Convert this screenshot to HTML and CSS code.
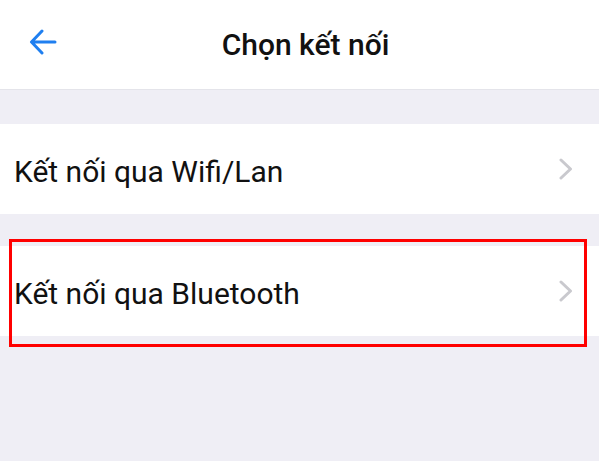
FILE: index.html
```html
<!DOCTYPE html>
<html lang="vi">
<head>
  <meta charset="UTF-8" />
  <meta name="viewport" content="width=device-width, initial-scale=1.0"/>
  <title>Chọn kết nối</title>
  <link rel="stylesheet" href="styles.css">
</head>
<body>

  <header class="topbar">
    <a class="back" href="#">
      <svg width="28" height="26" viewBox="0 0 28 26">
        <path d="M26 13H3M13 2L2.5 13L13 24" fill="none" stroke="#1f7ff0" stroke-width="3" stroke-linecap="round" stroke-linejoin="round"/>
      </svg>
    </a>
    <h1>Chọn kết nối</h1>
  </header>

  <div class="list">
    <a class="row" href="#">
      <span>Kết nối qua Wifi/Lan</span>
      <svg class="chev" width="14" height="22" viewBox="0 0 14 22">
        <path d="M2 2L11.5 11L2 20" fill="none" stroke="#c9c9ce" stroke-width="3" stroke-linecap="round" stroke-linejoin="round"/>
      </svg>
    </a>
    <div class="picked">
      <a class="row" href="#">
        <span>Kết nối qua Bluetooth</span>
        <svg class="chev" width="14" height="22" viewBox="0 0 14 22">
          <path d="M2 2L11.5 11L2 20" fill="none" stroke="#c9c9ce" stroke-width="3" stroke-linecap="round" stroke-linejoin="round"/>
        </svg>
      </a>
      <div class="mark"></div>
    </div>
  </div>

</body>
</html>
```

FILE: styles.css
```css
html, body {
  min-height: 100%;
}
body {
  margin: 0;
  min-height: 100vh;
  font-family: Roboto, "Noto Sans", sans-serif;
  background: #efeef5;
  color: #111;
}
.topbar {
  background: #fff;
  height: 89px;
  border-bottom: 1px solid #e4e4ea;
  display: flex;
  align-items: center;
  justify-content: center;
  padding-left: 12px;
  position: relative;
}
.back {
  position: absolute;
  left: 29px;
  top: 29px;
  display: flex;
}
.topbar h1 {
  margin: 0;
  font-size: 30px;
  font-weight: 500;
  color: #111;
}
.list {
  padding-top: 34px;
  display: flex;
  flex-direction: column;
  gap: 32px;
}
.row {
  background: #fff;
  height: 90px;
  box-sizing: border-box;
  display: flex;
  align-items: center;
  justify-content: space-between;
  padding: 5px 26px 0 14px;
  text-decoration: none;
  color: #111;
  font-size: 30px;
}
.chev {
  margin-top: -5px;
}
.picked {
  position: relative;
}
.mark {
  position: absolute;
  left: 9px;
  right: 12px;
  top: -7px;
  bottom: -11px;
  border: 3px solid #f00;
}
```
